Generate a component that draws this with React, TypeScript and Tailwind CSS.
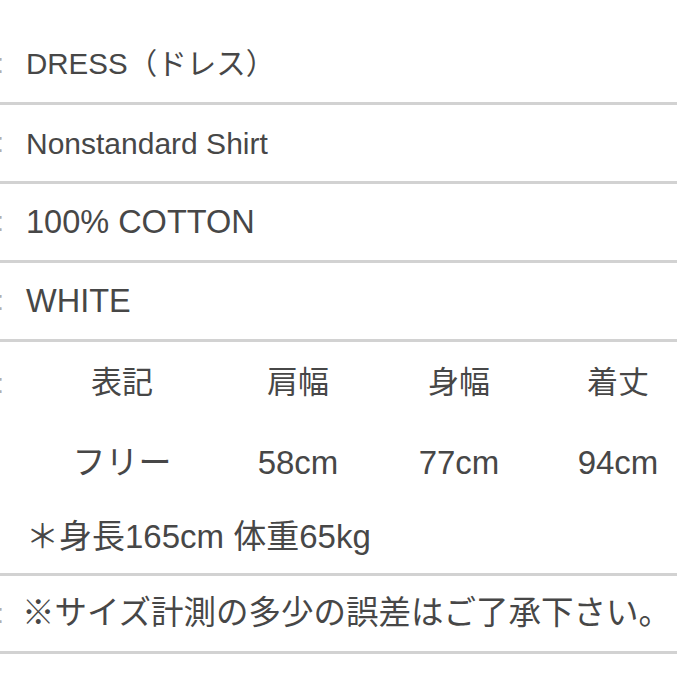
const rows = [
  { text: 'DRESS（ドレス）', size: 'text-[29.5px]' },
  { text: 'Nonstandard Shirt', size: 'text-[30px]' },
  { text: '100% COTTON', size: 'text-[32.5px]' },
  { text: 'WHITE', size: 'text-[32.5px]' },
];

const sizeHead = ['表記', '肩幅', '身幅', '着丈'];
const sizeVals = ['フリー', '58cm', '77cm', '94cm'];
const colW = ['w-[192px]', 'w-[160px]', 'w-[162px]', 'w-[156px]'];

// the cut-off label column at the very left edge
function EdgeMark() {
  return (
    <div className="w-[4px] shrink-0 overflow-hidden flex justify-end">
      <span className="text-[#b0b0b0] text-[28px] leading-none">:</span>
    </div>
  );
}

function Row({ text, size }: { text: string; size: string }) {
  return (
    <div className="flex items-center h-[79px] border-b-[3px] border-[#d2d2d2]">
      <EdgeMark />
      <span className={`ml-[22px] whitespace-nowrap ${size}`}>{text}</span>
    </div>
  );
}

export default function App() {
  return (
    <div
      className="w-[677px] h-[677px] overflow-hidden bg-white text-[#474747] text-[30px] pt-[26px]"
      style={{ fontFamily: '"Liberation Sans", "Noto Sans CJK JP", sans-serif' }}
    >
      {rows.map((r, i) => (
        <Row key={i} text={r.text} size={r.size} />
      ))}

      <div className="border-b-[3px] border-[#d2d2d2]">
        <div className="flex items-center h-[83px] text-[31px]">
          <EdgeMark />
          <div className="flex ml-[22px]">
            {sizeHead.map((h, i) => (
              <div key={i} className={`${colW[i]} shrink-0 text-center whitespace-nowrap`}>
                {h}
              </div>
            ))}
          </div>
        </div>
        <div className="flex items-center h-[76px] text-[33px]">
          <div className="w-[4px] shrink-0" />
          <div className="flex ml-[22px]">
            {sizeVals.map((v, i) => (
              <div key={i} className={`${colW[i]} shrink-0 text-center whitespace-nowrap`}>
                {v}
              </div>
            ))}
          </div>
        </div>
        <div className="flex items-center h-[72px] text-[33px]">
          <span className="ml-[26px] whitespace-nowrap">＊身長165cm 体重65kg</span>
        </div>
      </div>

      <div className="flex items-center h-[78px] border-b-[3px] border-[#d2d2d2]">
        <EdgeMark />
        <span className="ml-[18px] whitespace-nowrap text-[32.5px]">※サイズ計測の多少の誤差はご了承下さい。</span>
      </div>
    </div>
  );
}
